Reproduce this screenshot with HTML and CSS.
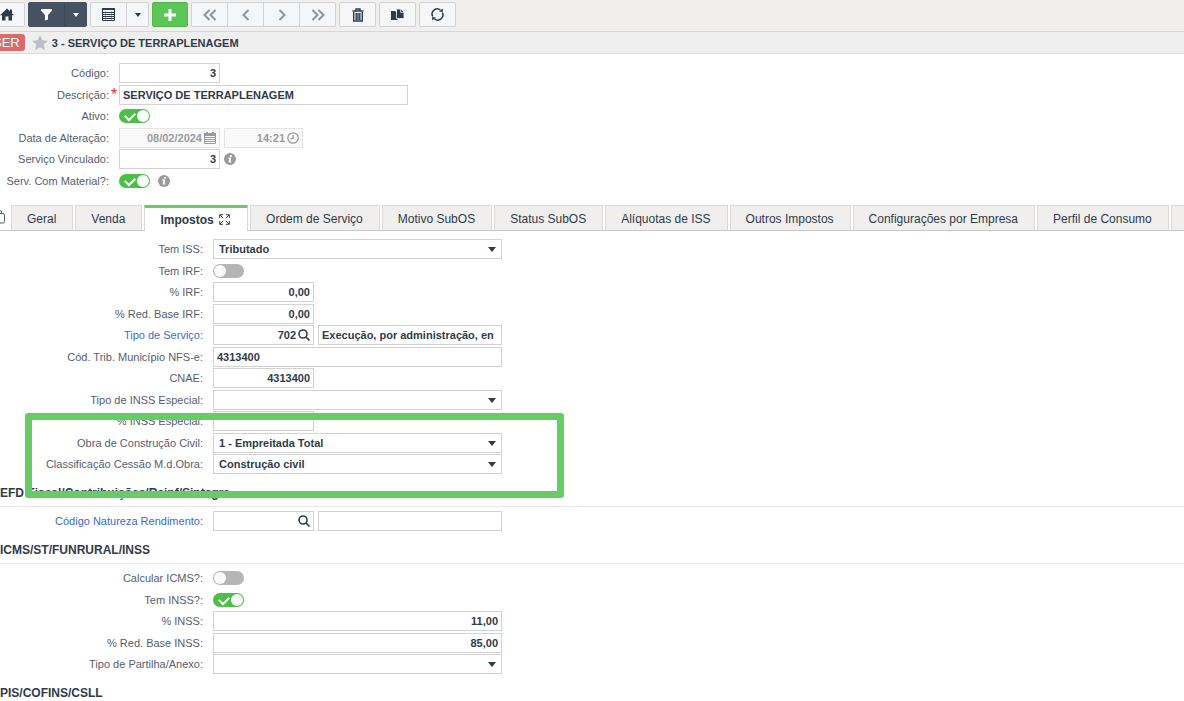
FILE: index.html
```html
<!DOCTYPE html>
<html lang="pt-BR">
<head>
    <meta charset="UTF-8">
    <meta name="viewport" content="width=device-width, initial-scale=1.0">
    <title>Serviços</title>
    <link rel="stylesheet" href="styles.css">
</head>
<body>

<div class="app">
    <div class="toolbar">
        <div class="btn-group">
            <button type="button" aria-label="Início"><svg width="14" height="13" viewBox="0 0 14 13"><path d="M7 0.5L10 3.3V1.5h2v3.8L14 7.2H12V12.5H8.5V8.5h-3v4H2V7.2H0z"/></svg></button>
        </div>
        <div class="btn-group dark">
            <button type="button" aria-label="Filtrar"><svg width="13" height="13" viewBox="0 0 13 13"><path d="M1 1h11v1.5L8 7v4.5L5 12.5V7L1 2.5z"/></svg></button>
            <button type="button" class="caret" aria-label="Opções de filtro"></button>
        </div>
        <div class="btn-group">
            <button type="button" aria-label="Grade"><svg width="13" height="13" viewBox="0 0 13 13"><path fill="none" stroke="currentColor" d="M.5.5h12v12H.5zM0 4.500h13M0 6.500h13M0 8.500h13M0 10.500h13"/><path fill="none" stroke="currentColor" stroke-opacity=".3" d="M3.500 3v9M9.500 3v9"/><path d="M0 0h13v2H0z"/></svg></button>
            <button type="button" class="caret" aria-label="Opções de grade"></button>
        </div>
        <div class="btn-group green">
            <button type="button" aria-label="Novo"><svg width="12" height="12" viewBox="0 0 12 12"><path d="M4.5 0h3v4.5H12v3H7.5V12h-3V7.5H0v-3h4.5z"/></svg></button>
        </div>
        <div class="btn-group nav">
            <button type="button" aria-label="Primeiro"><svg width="14" height="12" viewBox="0 0 14 12"><path d="M6.5 1L1.5 6l5 5M12.500 1l-5 5 5 5"/></svg></button>
            <button type="button" aria-label="Anterior"><svg width="10" height="12" viewBox="0 0 10 12"><path d="M7.500 1l-5 5 5 5"/></svg></button>
            <button type="button" aria-label="Próximo"><svg width="10" height="12" viewBox="0 0 10 12"><path d="M2.500 1l5 5-5 5"/></svg></button>
            <button type="button" aria-label="Último"><svg width="14" height="12" viewBox="0 0 14 12"><path d="M1.500 1l5 5-5 5M7.500 1l5 5-5 5"/></svg></button>
        </div>
        <div class="btn-group">
            <button type="button" aria-label="Excluir"><svg width="12" height="14" viewBox="0 0 12 14"><path fill="none" stroke="currentColor" stroke-width="1.400" d="M.5 3h11M4 2.500V1h4v1.500M1.700 4v9h8.600V4M4.200 5v7M6 5v7M7.800 5v7"/></svg></button>
        </div>
        <div class="btn-group">
            <button type="button" aria-label="Duplicar"><svg width="13" height="12" viewBox="0 0 13 12"><path d="M0 2h4l2.500 2.500V11H0z"/><path stroke="#f4f6f8" stroke-width=".8" d="M5.500 0h4.500l3 3v6.500H5.500z"/><path fill="none" stroke="#f4f6f8" stroke-width=".8" d="M9.700 0v3.300H13"/></svg></button>
        </div>
        <div class="btn-group">
            <button type="button" aria-label="Atualizar"><svg width="13" height="13" viewBox="0 0 13 13"><path fill="none" stroke="currentColor" stroke-width="1.500" d="M1.800 8.500A5 5 0 0 1 9.500 2.300M11.200 4.500A5 5 0 0 1 3.500 10.700"/><path d="M8 3.500L11.800 4V.5zM5 9.500L1.200 9v3.500z"/></svg></button>
        </div>
    </div>

    <div class="titlebar">
        <span class="badge">SER</span>
        <svg class="star" width="16" height="15" viewBox="0 0 16 15"><path d="M8 0l2.300 5.200 5.700.6-4.300 3.800 1.300 5.400L8 12.200 3 15l1.300-5.400L0 5.800l5.700-.6z"/></svg>
        <h1>3 - SERVIÇO DE TERRAPLENAGEM</h1>
    </div>

    <form class="rows header-form">
        <div class="row">
            <label for="codigo">Código:</label>
            <input type="text" id="codigo" class="short num" value="3">
        </div>
        <div class="row">
            <label for="descricao" class="required">Descrição:</label>
            <input type="text" id="descricao" class="long" value="SERVIÇO DE TERRAPLENAGEM">
        </div>
        <div class="row">
            <label for="ativo">Ativo:</label>
            <input type="checkbox" id="ativo" class="toggle" checked>
        </div>
        <div class="row">
            <label for="data">Data de Alteração:</label>
            <div class="field short">
                <input type="text" id="data" class="num" value="08/02/2024" disabled>
                <svg class="muted" width="12" height="12" viewBox="0 0 12 12"><path fill="none" stroke="currentColor" d="M.5 1.500h11v10H.5zM0 5.500h12M0 7.500h12M0 9.500h12"/><path d="M0 1h12v3H0zM2 0h2v2H2zM8 0h2v2H8z"/></svg>
            </div>
            <div class="field time">
                <input type="text" class="num" value="14:21" aria-label="Hora de Alteração" disabled>
                <svg class="muted" width="12" height="12" viewBox="0 0 12 12"><path fill="none" stroke="currentColor" stroke-width="1.300" d="M6 .8a5.200 5.200 0 1 1 0 10.400A5.200 5.200 0 1 1 6 .8M6.200 3v3.500H3.500"/></svg>
            </div>
        </div>
        <div class="row">
            <label for="vinculado">Serviço Vinculado:</label>
            <input type="text" id="vinculado" class="short num" value="3">
            <svg class="info" width="12" height="12" viewBox="0 0 12 12"><circle cx="6" cy="6" r="6"/><path d="M6 2h2L7.700 3.700H5.700zM4.500 4.600h2.800L6.600 8.500h.8L7.200 9.600H4.600L5.300 5.700H4.300z"/></svg>
        </div>
        <div class="row">
            <label for="material">Serv. Com Material?:</label>
            <input type="checkbox" id="material" class="toggle" checked>
            <svg class="info after-toggle" width="12" height="12" viewBox="0 0 12 12"><circle cx="6" cy="6" r="6"/><path d="M6 2h2L7.700 3.700H5.700zM4.500 4.600h2.800L6.600 8.500h.8L7.200 9.600H4.600L5.300 5.700H4.300z"/></svg>
        </div>
    </form>

    <div class="tabs" role="tablist">
        <svg class="tabs-icon" width="14" height="14" viewBox="0 0 14 14"><path d="M.5 3.500h11a1.500 1.500 0 0 1 1.500 1.500v6.500a1.500 1.500 0 0 1-1.500 1.500H.5M4 3V1h6v2"/></svg>
        <button type="button" role="tab">Geral</button>
        <button type="button" role="tab">Venda</button>
        <button type="button" role="tab" class="active" aria-selected="true">Impostos <svg width="11" height="11" viewBox="0 0 11 11"><path d="M.7 4V.7H4M7 .7h3.300V4M10.300 7v3.300H7M4 10.300H.7V7M1 1l3.200 3.200M10 1L6.800 4.200M10 10L6.800 6.800M1 10l3.200-3.200"/></svg></button>
        <button type="button" role="tab">Ordem de Serviço</button>
        <button type="button" role="tab">Motivo SubOS</button>
        <button type="button" role="tab">Status SubOS</button>
        <button type="button" role="tab">Alíquotas de ISS</button>
        <button type="button" role="tab">Outros Impostos</button>
        <button type="button" role="tab">Configurações por Empresa</button>
        <button type="button" role="tab">Perfil de Consumo</button>
        <button type="button" role="tab" aria-label="Mais"></button>
    </div>

    <form class="tab-content">
        <div class="rows">
            <div class="row">
                <label for="iss">Tem ISS:</label>
                <div class="select long"><select id="iss"><option>Tributado</option></select></div>
            </div>
            <div class="row">
                <label for="irf">Tem IRF:</label>
                <input type="checkbox" id="irf" class="toggle">
            </div>
            <div class="row">
                <label for="pirf">% IRF:</label>
                <input type="text" id="pirf" class="short num" value="0,00">
            </div>
            <div class="row">
                <label for="redirf">% Red. Base IRF:</label>
                <input type="text" id="redirf" class="short num" value="0,00">
            </div>
            <div class="row">
                <label for="tiposervico" class="link">Tipo de Serviço:</label>
                <div class="field short">
                    <input type="text" id="tiposervico" class="num" value="702">
                    <svg class="search" width="12" height="12" viewBox="0 0 12 12"><circle cx="5" cy="5" r="4"/><path d="M8 8l3.500 3.500"/></svg>
                </div>
                <input type="text" class="medium" value="Execução, por administração, en" aria-label="Descrição do tipo de serviço">
            </div>
            <div class="row">
                <label for="nfse">Cód. Trib. Município NFS-e:</label>
                <input type="text" id="nfse" class="long" value="4313400">
            </div>
            <div class="row">
                <label for="cnae">CNAE:</label>
                <input type="text" id="cnae" class="short num" value="4313400">
            </div>
            <div class="row">
                <label for="inssesp">Tipo de INSS Especial:</label>
                <div class="select long"><select id="inssesp"><option></option></select></div>
            </div>
            <div class="row">
                <label for="pinssesp">% INSS Especial:</label>
                <input type="text" id="pinssesp" class="short num">
            </div>
            <div class="row">
                <label for="obra">Obra de Construção Civil:</label>
                <div class="select long"><select id="obra"><option>1 - Empreitada Total</option></select></div>
            </div>
            <div class="row">
                <label for="cessao">Classificação Cessão M.d.Obra:</label>
                <div class="select long"><select id="cessao"><option>Construção civil</option></select></div>
            </div>
        </div>

        <h2>EFD Fiscal/Contribuições/Reinf/Sintegra</h2>
        <div class="rows">
            <div class="row">
                <label for="natureza" class="link">Código Natureza Rendimento:</label>
                <div class="field short">
                    <input type="text" id="natureza" class="num">
                    <svg class="search" width="12" height="12" viewBox="0 0 12 12"><circle cx="5" cy="5" r="4"/><path d="M8 8l3.500 3.500"/></svg>
                </div>
                <input type="text" class="medium" aria-label="Descrição da natureza">
            </div>
        </div>

        <h2>ICMS/ST/FUNRURAL/INSS</h2>
        <div class="rows">
            <div class="row">
                <label for="icms">Calcular ICMS?:</label>
                <input type="checkbox" id="icms" class="toggle">
            </div>
            <div class="row">
                <label for="inss">Tem INSS?:</label>
                <input type="checkbox" id="inss" class="toggle" checked>
            </div>
            <div class="row">
                <label for="pinss">% INSS:</label>
                <input type="text" id="pinss" class="long num" value="11,00">
            </div>
            <div class="row">
                <label for="redinss">% Red. Base INSS:</label>
                <input type="text" id="redinss" class="long num" value="85,00">
            </div>
            <div class="row">
                <label for="partilha">Tipo de Partilha/Anexo:</label>
                <div class="select long"><select id="partilha"><option></option></select></div>
            </div>
        </div>

        <h2 class="last">PIS/COFINS/CSLL</h2>

        <div class="highlight"></div>
    </form>
</div>

</body>
</html>
```

FILE: styles.css
```css
* {
    box-sizing: border-box;
}
body {
    margin: 0;
    background: #fff;
    color: #2f3b4c;
    font-family: "Liberation Sans", Arial, sans-serif;
    font-size: 12px;
    overflow-x: hidden;
}
.app {
    margin-left: -12px;
}
button, input, select {
    font-family: inherit;
    color: inherit;
    margin: 0;
}
svg {
    flex: none;
    fill: currentColor;
}

/* toolbar */
.toolbar {
    display: flex;
    gap: 3px;
    height: 32px;
    padding-top: 2px;
    background: #f0efee;
    border-bottom: 1px solid #d6d6d6;
}
.btn-group {
    display: flex;
    height: 25px;
    background: #f4f6f8;
    border: 1px solid #d0d2d4;
    border-radius: 2px;
}
.btn-group button {
    display: flex;
    align-items: center;
    justify-content: center;
    width: 35px;
    padding: 0;
    background: none;
    border: 0;
    cursor: pointer;
}
.btn-group button + button {
    width: 36px;
    border-left: 1px solid #d0d2d4;
}
.btn-group .caret,
.btn-group button + .caret {
    width: 22px;
}
.caret::after, .select::after {
    content: "";
    border: 4px solid transparent;
    border-top: 5px solid currentColor;
    border-bottom: 0;
}
.caret::after {
    border-width: 4px 3px 0;
}
.btn-group.dark {
    background: #465162;
    border-color: #465162;
    color: #fff;
}
.btn-group.dark button + button {
    border-color: #3c4757;
}
.btn-group.green {
    background: #5bc656;
    border-color: #51b94c;
    color: #fff;
}
.green button {
    width: 34px;
}
.nav {
    color: #8f959e;
}
.nav svg {
    fill: none;
    stroke: currentColor;
    stroke-width: 2;
}

/* title */
.titlebar {
    display: flex;
    align-items: center;
    height: 22px;
    background: #efefef;
    border-bottom: 1px solid #dcdcdc;
}
.badge {
    padding: 0 5px;
    line-height: 17px;
    font-size: 13px;
    color: #fff;
    background: #dc6a6a;
    border-radius: 3px;
}
.star {
    margin: 0 4px 0 7px;
    color: #bcbfc5;
}
h1 {
    margin: 0;
    font-size: 11px;
}

/* form rows */
.header-form {
    --label: 121px;
    padding: 9px 0 14px;
}
.tab-content {
    --label: 215px;
    position: relative;
    padding-top: 8px;
}
.row {
    display: flex;
    align-items: center;
    gap: 4px;
    height: 20px;
    margin-bottom: 1px;
}
.row:nth-child(odd) {
    margin-bottom: 2px;
}
.row:last-child {
    margin-bottom: 0;
}
.row label {
    position: relative;
    width: var(--label);
    margin-right: 6px;
    font-size: 11px;
    text-align: right;
    white-space: nowrap;
    color: #56606e;
}
.row .link {
    color: #4169d0;
}
.required::after {
    content: "*";
    position: absolute;
    left: 100%;
    top: -2px;
    padding-left: 2px;
    font-size: 16px;
    line-height: 16px;
    color: #d9302c;
}
.row input[type="text"], select {
    height: 20px;
    padding: 0 3px;
    font-size: 11px;
    font-weight: bold;
    background: #fff;
    border: 1px solid #d2d2d2;
    border-radius: 0;
    outline: none;
}
.row .num {
    text-align: right;
}
.short {
    width: 101px;
}
.medium {
    width: 184px;
}
.long {
    width: 289px;
}
.time {
    width: 79px;
}
.field, .select {
    position: relative;
    display: flex;
}
.row .field input {
    width: 100%;
    padding-right: 17px;
}
.field svg {
    position: absolute;
    right: 4px;
    top: 4px;
}
.row input:disabled {
    color: #9b9b9b;
    background: #fafafa;
    border-color: #e4e4e4;
}
.muted {
    color: #9b9b9b;
}
.search {
    fill: none;
    stroke: currentColor;
    stroke-width: 1.6;
}
.row select {
    width: 100%;
    padding: 0 5px;
    appearance: none;
}
.select::after {
    position: absolute;
    right: 6px;
    top: 8px;
    pointer-events: none;
}
.toggle {
    appearance: none;
    display: flex;
    align-items: center;
    justify-content: space-between;
    width: 31px;
    height: 14px;
    padding: 0 1px;
    border-radius: 7px;
    background: #b5b5b5;
}
.toggle::before {
    content: "";
    width: 12px;
    height: 12px;
    border-radius: 50%;
    background: #fafafa;
}
.toggle:checked {
    flex-direction: row-reverse;
    background: #4bbf47;
}
.toggle:checked::after {
    content: "";
    width: 8px;
    height: 5px;
    margin: 0 0 2px 5px;
    border: solid #fff;
    border-width: 0 0 2px 2px;
    transform: rotate(-45deg);
}
.info {
    color: #9a9a9a;
}
.info path {
    fill: #fff;
}
.after-toggle {
    margin-left: 4px;
}

/* tabs */
.tabs {
    display: flex;
    gap: 2px;
    height: 26px;
    overflow: hidden;
    box-shadow: inset 0 -1px #c9c9c9;
}
.tabs-icon {
    width: 21px;
    margin: 5px 0 0;
    fill: none;
    stroke: #56606e;
}
.tabs button {
    flex: none;
    height: 26px;
    padding: 2px 16px 0 15px;
    font-size: 12px;
    background: #f0efee;
    border: 1px solid #d9d9d9;
    border-bottom-color: #c9c9c9;
    cursor: pointer;
}
.tabs .active {
    padding: 0 17px 0 15px;
    font-weight: bold;
    background: #fff;
    border-top: 3px solid #66cc66;
    border-bottom: 0;
}
.tabs button svg {
    margin-left: 2px;
    vertical-align: -1px;
    fill: none;
    stroke: currentColor;
}

h2 {
    margin: 0 0 4px;
    padding: 11px 0 5px 12px;
    font-size: 12px;
    line-height: 16px;
    border-bottom: 1px solid #e8e8e8;
}
.last {
    margin: 0;
    padding-bottom: 0;
    border: 0;
}
/* green marker over the construction fields */
.highlight {
    position: absolute;
    left: 37px;
    top: 182px;
    width: 539px;
    height: 85px;
    border: 7px solid #66cc66;
    border-radius: 3px;
    pointer-events: none;
}
```
